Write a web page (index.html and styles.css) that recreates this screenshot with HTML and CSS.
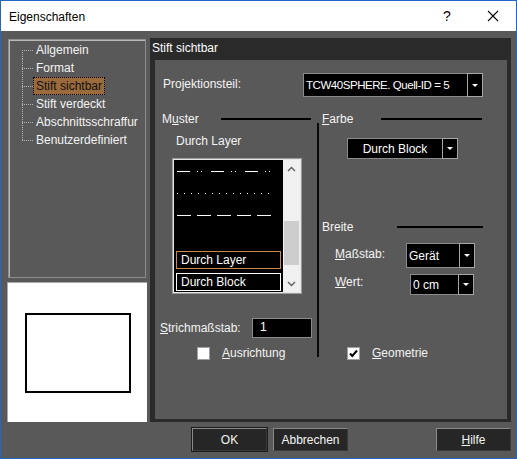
FILE: index.html
```html
<!DOCTYPE html>
<html>
<head>
<meta charset="UTF-8">
<title>Eigenschaften</title>
<link rel="stylesheet" href="styles.css">
</head>
<body>

<div class="window">
	<div class="titlebar">
		<span class="title">Eigenschaften</span>
		<span class="cap-btn help">?</span>
		<span class="cap-btn close">
			<svg width="12" height="12" viewBox="0 0 12 12"><path d="M1 1 L11 11 M11 1 L1 11" stroke="#000" stroke-width="1.1" fill="none"/></svg>
		</span>
	</div>

	<div class="client">
		<div class="main">
			<!-- linke Seite: Baum + Vorschau -->
			<div class="sidebar">
				<div class="tree">
					<ul>
						<li class="first"><span class="twig"></span><span class="node">Allgemein</span></li>
						<li><span class="twig"></span><span class="node">Format</span></li>
						<li><span class="twig"></span><span class="node selected">Stift sichtbar</span></li>
						<li><span class="twig"></span><span class="node">Stift verdeckt</span></li>
						<li><span class="twig"></span><span class="node">Abschnittsschraffur</span></li>
						<li class="last"><span class="twig"></span><span class="node">Benutzerdefiniert</span></li>
					</ul>
				</div>
				<div class="preview">
					<div class="shape"></div>
				</div>
			</div>

			<!-- rechte Seite: Eigenschaftsseite -->
			<div class="page">
				<div class="page-title">Stift sichtbar</div>
				<div class="page-body">
					<div class="proj-row">
						<span class="lbl">Projektionsteil:</span>
						<div class="combo proj-combo">
							<span class="field">TCW40SPHERE. Quell-ID = 5</span>
							<span class="drop"><i class="tri"></i></span>
						</div>
					</div>

					<div class="columns">
						<div class="col-left">
							<div class="group-head"><span>M<u>u</u>ster</span><span class="rule muster-rule"></span></div>
							<div class="sub-label">Durch Layer</div>

							<div class="listbox">
								<div class="list-area">
									<svg class="patterns" width="100" height="60" viewBox="0 0 100 60">
										<line x1="0" y1="11.5" x2="96" y2="11.5" stroke="#fff" stroke-width="1" stroke-dasharray="13 7 1 3 1 9"/>
										<line x1="0" y1="33.5" x2="96" y2="33.5" stroke="#fff" stroke-width="1" stroke-dasharray="1 6"/>
										<line x1="0" y1="55.5" x2="96" y2="55.5" stroke="#fff" stroke-width="1" stroke-dasharray="14 6"/>
									</svg>
									<div class="list-item current">Durch Layer</div>
									<div class="list-item">Durch Block</div>
								</div>
								<div class="scrollbar">
									<div class="arrow">
										<svg width="9" height="6" viewBox="0 0 9 6"><path d="M1 5 L4.5 1.5 L8 5" stroke="#606060" stroke-width="1.4" fill="none"/></svg>
									</div>
									<div class="track"><div class="thumb"></div></div>
									<div class="arrow">
										<svg width="9" height="6" viewBox="0 0 9 6"><path d="M1 1 L4.5 4.5 L8 1" stroke="#606060" stroke-width="1.4" fill="none"/></svg>
									</div>
								</div>
							</div>

							<div class="strich-row">
								<span class="lbl"><u>S</u>trichmaßstab:</span>
								<span class="edit">1</span>
							</div>
							<div class="check-row left-check">
								<span class="checkbox"></span>
								<span class="lbl"><u>A</u>usrichtung</span>
							</div>
						</div>

						<div class="divider"></div>

						<div class="col-right">
							<div class="group-head"><span><u>F</u>arbe</span><span class="rule farbe-rule"></span></div>
							<div class="combo farbe-combo">
								<span class="field centered">Durch Block</span>
								<span class="drop"><i class="tri"></i></span>
							</div>

							<div class="group-head breite-head"><span>Breite</span><span class="rule breite-rule"></span></div>
							<div class="field-row massstab-row">
								<span class="lbl"><u>M</u>aßstab:</span>
								<div class="combo">
									<span class="field">Gerät</span>
									<span class="drop"><i class="tri"></i></span>
								</div>
							</div>
							<div class="field-row wert-row">
								<span class="lbl"><u>W</u>ert:</span>
								<div class="combo">
									<span class="field">0 cm</span>
									<span class="drop"><i class="tri"></i></span>
								</div>
							</div>

							<div class="check-row right-check">
								<span class="checkbox">
									<svg width="11" height="11" viewBox="0 0 11 11"><path d="M2 5.5 L4.3 8 L9 2.5" stroke="#000" stroke-width="2" fill="none"/></svg>
								</span>
								<span class="lbl"><u>G</u>eometrie</span>
							</div>
						</div>
					</div>
				</div>
			</div>
		</div>

		<div class="buttons">
			<button type="button" class="btn btn-ok">OK</button>
			<button type="button" class="btn">Abbrechen</button>
			<button type="button" class="btn btn-help"><u>H</u>ilfe</button>
		</div>
	</div>
</div>

</body>
</html>
```

FILE: styles.css
```css
* { box-sizing: border-box; }

body { margin: 0; background: #595959; }

.window
{
	width: 517px; height: 459px;
	border: 1px solid #2566c4;
	background: #595959;
	display: flex; flex-direction: column;
	font-family: "Liberation Sans", Arial, sans-serif;
	font-size: 12px;
	color: #f4f4f4;
}

/* Titelleiste */
.titlebar
{
	height: 30px; flex: none;
	background: #fff; color: #000;
	display: flex; align-items: center;
	padding-left: 8px;
}
.title { flex: 1; padding-top: 1px; }
.cap-btn { width: 46px; height: 30px; display: flex; align-items: center; justify-content: center; }
.help { font-size: 14px; }

.client { flex: 1; padding: 7px 5px 0 6px; }
.main { display: flex; gap: 2px; height: 384px; }

/* Baum */
.sidebar { width: 141px; display: flex; flex-direction: column; }
.tree
{
	margin: 1px 2px 0 1px; height: 239px;
	border: 1px solid #8e8e8e;
	box-shadow: inset 1px 1px 0 #b8b8b8;
}
.tree ul { list-style: none; margin: 0; padding: 1px 0 0 13px; }
.tree li { display: flex; align-items: center; height: 18px; }
.twig
{
	width: 11px; height: 18px;
	background:
		repeating-linear-gradient(to bottom, #b4b4b4 0 1px, transparent 1px 2px) 0 0 / 1px 100% no-repeat,
		repeating-linear-gradient(to right, #b4b4b4 0 1px, transparent 1px 2px) 0 9px / 100% 1px no-repeat;
}
.tree li.first .twig
{
	background:
		repeating-linear-gradient(to bottom, #b4b4b4 0 1px, transparent 1px 2px) 0 9px / 1px 9px no-repeat,
		repeating-linear-gradient(to right, #b4b4b4 0 1px, transparent 1px 2px) 0 9px / 100% 1px no-repeat;
}
.tree li.last .twig
{
	background:
		repeating-linear-gradient(to bottom, #b4b4b4 0 1px, transparent 1px 2px) 0 0 / 1px 10px no-repeat,
		repeating-linear-gradient(to right, #b4b4b4 0 1px, transparent 1px 2px) 0 9px / 100% 1px no-repeat;
}
.node { padding: 1px 2px; border: 1px solid transparent; line-height: 14px; white-space: nowrap; }
.node.selected { background: #9b6b3c; color: #111; border: 1px dotted #000; }

.preview
{
	margin-top: 4px; width: 140px; height: 140px;
	background: #fff;
	border-left: 1px solid #a9a9a9; border-top: 1px solid #a9a9a9;
	padding: 30px 0 0 17px;
}
.shape { width: 106px; height: 80px; border: 2px solid #000; }

/* Eigenschaftsseite */
.page { width: 361px; background: #2a2a2a; display: flex; flex-direction: column; }
.page-title { height: 22px; line-height: 21px; padding-left: 2px; color: #fff; }
.page-body { flex: 1; margin: 0 4px 3px 5px; background: #595959; padding-top: 13px; }

.proj-row { display: flex; align-items: center; height: 24px; padding: 0 24px 0 8px; }
.proj-row .lbl { margin-top: -3px; }

.combo { display: flex; background: #000; color: #fff; }
.combo .field
{
	flex: 1; border: 1px solid #8a8a8a; border-right: none;
	padding-left: 2px; display: flex; align-items: center; white-space: nowrap; overflow: hidden;
}
.combo .field.centered { justify-content: center; padding-left: 0; }
.combo .drop
{
	width: 16px; flex: none; border: 1px solid #a6a6a6; background: #000;
	display: flex; align-items: center; justify-content: center;
}
.tri { width: 0; height: 0; border-left: 3px solid transparent; border-right: 3px solid transparent; border-top: 3px solid #fff; }
.proj-combo { width: 180px; height: 24px; margin-left: auto; }
.proj-combo .field { font-size: 11.5px; letter-spacing: -0.45px; }

.columns { display: flex; margin-top: 15px; height: 250px; }
.col-left { width: 162px; padding-left: 7px; }
.divider { width: 2px; background: #0a0a0a; margin-top: 11px; height: 234px; }
.col-right { flex: 1; padding-left: 3px; }

.group-head { display: flex; align-items: center; height: 14px; }
.rule { height: 2px; background: #000; margin-left: auto; }
.muster-rule { width: 90px; margin-right: 6px; }
.farbe-rule { width: 101px; margin-right: 25px; }
.breite-rule { width: 86px; margin-right: 24px; }

.sub-label { margin: 8px 0 0 14px; line-height: 14px; }

.listbox
{
	display: flex;
	margin: 10px 0 0 10px; width: 130px; height: 136px;
	border: 1px solid #9c9c9c;
	padding: 1px;
	background: #e6e6e6;
}
.list-area { flex: 1; background: #000; display: flex; flex-direction: column; padding: 0 2px 1px 2px; }
.patterns { margin: 0 0 0 1px; }
.list-item { height: 18px; line-height: 16px; padding-left: 4px; border: 1px solid #fff; color: #fff; }
.list-item.current { margin-top: auto; border-color: #c48a4e; }
.list-item + .list-item { margin-top: 4px; }
.scrollbar { width: 17px; background: #f0f0f0; display: flex; flex-direction: column; }
.arrow { height: 17px; display: flex; align-items: center; justify-content: center; }
.track { flex: 1; padding-top: 44px; }
.thumb { height: 44px; margin: 0 1px; background: #cdcdcd; }

.strich-row { display: flex; align-items: center; height: 20px; margin: 24px 5px 0 -2px; }
.edit
{
	margin-left: auto; width: 60px; height: 20px;
	background: #000; color: #fff; border: 1px solid #8a8a8a;
	padding-left: 7px; line-height: 16px;
}

.check-row { display: flex; align-items: center; height: 14px; margin-top: 8px; }
.checkbox
{
	width: 13px; height: 13px; background: #fff;
	border: 1px solid #a0a0a0;
	display: flex; align-items: center; justify-content: center;
	margin-right: 12px;
}
.left-check .checkbox { margin-left: 35px; }
.right-check { margin-top: 51px; }
.right-check .checkbox { margin-left: 25px; }

.farbe-combo { width: 111px; height: 21px; margin: 12px 0 0 25px; }
.breite-head { margin-top: 61px; }
.field-row { display: flex; align-items: center; padding-left: 13px; }
.massstab-row { margin-top: 9px; height: 25px; }
.massstab-row .lbl { width: 71px; margin-top: -3px; }
.massstab-row .combo { width: 69px; height: 25px; }
.wert-row { margin-top: 6px; height: 21px; }
.wert-row .lbl { width: 75px; margin-top: -6px; }
.wert-row .combo { width: 64px; height: 21px; }

/* Knopfleiste */
.buttons { display: flex; margin-top: 6px; height: 23px; }
.btn
{
	width: 75px; height: 23px;
	background: #262626; color: #f4f4f4;
	border: 1px solid #8a8a8a; border-right-color: #3a3a3a; border-bottom-color: #3a3a3a;
	font-family: "Liberation Sans", Arial, sans-serif; font-size: 12px;
	padding: 0;
}
.btn-ok { margin-left: 185px; margin-right: 6px; box-shadow: 0 0 0 1px #1c1c1c; }
.btn-help { margin-left: auto; }
```
